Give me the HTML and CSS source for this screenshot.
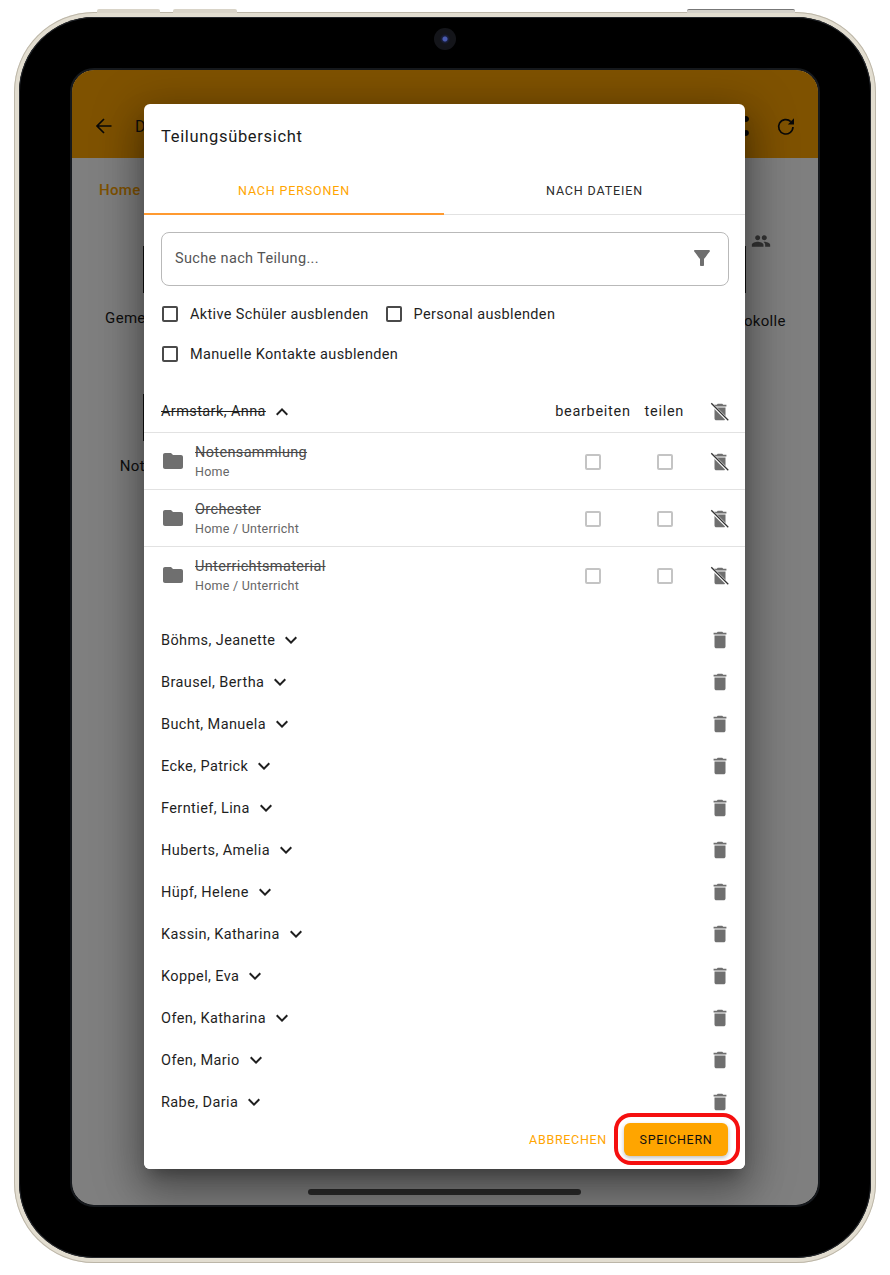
FILE: index.html
```html
<!DOCTYPE html>
<html lang="de">
<head>
  <meta charset="UTF-8" />
  <title>Teilungsübersicht</title>
  <link rel="stylesheet" href="styles.css">
</head>
<body>
  <svg class="icon-defs" width="0" height="0">
    <defs>
      <symbol id="i-trash" viewBox="0 0 24 24"><path d="M6 19c0 1.100.9 2 2 2h8c1.100 0 2-.9 2-2V7H6v12zM19 4h-3.500l-1-1h-5l-1 1H5v2h14V4z"/></symbol>
      <symbol id="i-trash-off" viewBox="0 0 24 24"><path d="M6 19c0 1.100.9 2 2 2h8c1.100 0 2-.9 2-2V7H6v12zM19 4h-3.500l-1-1h-5l-1 1H5v2h14V4z"/><path d="M3 3.500 21 21.500" fill="none" stroke="#fff" stroke-width="3.200"/><path d="M2.500 2.500 21 21" fill="none" stroke="#333" stroke-width="1.400"/></symbol>
      <symbol id="i-folder" viewBox="0 0 24 24"><path d="M10 4H4c-1.100 0-2 .9-2 2v12c0 1.100.9 2 2 2h16c1.100 0 2-.9 2-2V8c0-1.100-.9-2-2-2h-8l-2-2z"/></symbol>
      <symbol id="i-down" viewBox="0 0 24 24"><path d="M7.410 8.590 12 13.170l4.590-4.580L18 10l-6 6-6-6z"/></symbol>
      <symbol id="i-up" viewBox="0 0 24 24"><path d="M7.410 15.410 12 10.830l4.590 4.580L18 14l-6-6-6 6z"/></symbol>
    </defs>
  </svg>

  <div class="device">
    <span class="side-btn side-btn-a"></span>
    <span class="side-btn side-btn-b"></span>
    <span class="side-btn side-btn-c"></span>
    <div class="bezel">
      <span class="camera"></span>
      <div class="screen">
        <header class="appbar">
          <svg class="appbar-icon appbar-line" viewBox="0 0 24 24"><path d="M19.500 12H5M12 5l-7 7 7 7"/></svg>
          <span class="appbar-title">D</span>
          <span class="appbar-spacer"></span>
          <svg class="appbar-icon" viewBox="0 0 24 24"><path d="M18 16.080c-.76 0-1.440.3-1.960.77L8.910 12.700c.05-.23.09-.46.09-.7s-.04-.47-.09-.7l7.050-4.110c.54.5 1.250.81 2.040.81 1.660 0 3-1.340 3-3s-1.340-3-3-3-3 1.340-3 3c0 .24.04.47.09.7L8.040 9.810C7.500 9.310 6.790 9 6 9c-1.660 0-3 1.340-3 3s1.340 3 3 3c.79 0 1.500-.31 2.040-.81l7.120 4.160c-.05.21-.08.43-.08.650 0 1.610 1.310 2.920 2.920 2.920s2.920-1.310 2.920-2.920-1.310-2.920-2.920-2.920z"/></svg>
          <svg class="appbar-icon appbar-line" viewBox="0 0 24 24"><path d="M19 13a7.200 7.200 0 1 1-2.200-5.400"/><path class="appbar-head" d="M13.800 10.500H20V4.300z"/></svg>
        </header>
        <main class="files">
          <div class="crumbs">Home</div>
          <div class="tiles">
            <div class="tile">
              <span class="tile-mark"></span>
              <span class="tile-label">Gemeinsam</span>
            </div>
            <div class="tile tile-last">
              <span class="tile-mark"></span>
              <svg class="tile-badge" viewBox="0 0 24 24"><path d="M16 11c1.660 0 2.990-1.340 2.990-3S17.660 5 16 5s-3 1.340-3 3 1.340 3 3 3zm-8 0c1.660 0 2.990-1.340 2.990-3S9.660 5 8 5 5 6.340 5 8s1.340 3 3 3zm0 2c-2.330 0-7 1.170-7 3.500V19h14v-2.500C15 14.170 10.330 13 8 13zm8 0c-.29 0-.62.020-.97.050 1.160.84 1.970 1.970 1.970 3.450V19h6v-2.500c0-2.330-4.670-3.500-7-3.500z"/></svg>
              <span class="tile-label">Protokolle</span>
            </div>
            <div class="tile">
              <span class="tile-mark"></span>
              <span class="tile-label">Notizen</span>
            </div>
          </div>
        </main>
        <span class="home-bar"></span>
        <div class="scrim"></div>
      </div>
    </div>
  </div>

  <section class="dialog">
    <h2 class="dialog-title">Teilungsübersicht</h2>
    <div class="tabs">
      <div class="tab tab-active">Nach Personen</div>
      <div class="tab">Nach Dateien</div>
    </div>

    <div class="dialog-body">
      <div class="search">
        <span>Suche nach Teilung...</span>
        <svg class="search-filter" viewBox="0 0 24 24"><path d="M4.250 5.610C6.270 8.200 10 13 10 13v6c0 .55.45 1 1 1h2c.55 0 1-.45 1-1v-6s3.720-4.800 5.740-7.390A.998.998 0 0 0 18.950 4H5.040c-.83 0-1.300.95-.79 1.610z"/></svg>
      </div>

      <div class="filters">
        <label class="filter"><span class="check"></span>Aktive Schüler ausblenden</label>
        <label class="filter"><span class="check"></span>Personal ausblenden</label>
        <label class="filter"><span class="check"></span>Manuelle Kontakte ausblenden</label>
      </div>

      <div class="person-head">
        <span class="person-name struck">Armstark, Anna</span>
        <svg class="chevron"><use href="#i-up"/></svg>
        <span class="col-title col-edit">bearbeiten</span>
        <span class="col-title col-share">teilen</span>
        <svg class="trash"><use href="#i-trash-off"/></svg>
      </div>

      <div class="share-row">
        <svg class="folder"><use href="#i-folder"/></svg>
        <div class="share-text">
          <div class="share-name struck">Notensammlung</div>
          <div class="share-path">Home</div>
        </div>
        <span class="box box-edit"></span>
        <span class="box box-share"></span>
        <svg class="trash"><use href="#i-trash-off"/></svg>
      </div>
      <div class="share-row">
        <svg class="folder"><use href="#i-folder"/></svg>
        <div class="share-text">
          <div class="share-name struck">Orchester</div>
          <div class="share-path">Home / Unterricht</div>
        </div>
        <span class="box box-edit"></span>
        <span class="box box-share"></span>
        <svg class="trash"><use href="#i-trash-off"/></svg>
      </div>
      <div class="share-row share-row-last">
        <svg class="folder"><use href="#i-folder"/></svg>
        <div class="share-text">
          <div class="share-name struck">Unterrichtsmaterial</div>
          <div class="share-path">Home / Unterricht</div>
        </div>
        <span class="box box-edit"></span>
        <span class="box box-share"></span>
        <svg class="trash"><use href="#i-trash-off"/></svg>
      </div>

      <ul class="people">
        <li class="person"><span class="person-name">Böhms, Jeanette</span><svg class="chevron"><use href="#i-down"/></svg><svg class="trash"><use href="#i-trash"/></svg></li>
        <li class="person"><span class="person-name">Brausel, Bertha</span><svg class="chevron"><use href="#i-down"/></svg><svg class="trash"><use href="#i-trash"/></svg></li>
        <li class="person"><span class="person-name">Bucht, Manuela</span><svg class="chevron"><use href="#i-down"/></svg><svg class="trash"><use href="#i-trash"/></svg></li>
        <li class="person"><span class="person-name">Ecke, Patrick</span><svg class="chevron"><use href="#i-down"/></svg><svg class="trash"><use href="#i-trash"/></svg></li>
        <li class="person"><span class="person-name">Ferntief, Lina</span><svg class="chevron"><use href="#i-down"/></svg><svg class="trash"><use href="#i-trash"/></svg></li>
        <li class="person"><span class="person-name">Huberts, Amelia</span><svg class="chevron"><use href="#i-down"/></svg><svg class="trash"><use href="#i-trash"/></svg></li>
        <li class="person"><span class="person-name">Hüpf, Helene</span><svg class="chevron"><use href="#i-down"/></svg><svg class="trash"><use href="#i-trash"/></svg></li>
        <li class="person"><span class="person-name">Kassin, Katharina</span><svg class="chevron"><use href="#i-down"/></svg><svg class="trash"><use href="#i-trash"/></svg></li>
        <li class="person"><span class="person-name">Koppel, Eva</span><svg class="chevron"><use href="#i-down"/></svg><svg class="trash"><use href="#i-trash"/></svg></li>
        <li class="person"><span class="person-name">Ofen, Katharina</span><svg class="chevron"><use href="#i-down"/></svg><svg class="trash"><use href="#i-trash"/></svg></li>
        <li class="person"><span class="person-name">Ofen, Mario</span><svg class="chevron"><use href="#i-down"/></svg><svg class="trash"><use href="#i-trash"/></svg></li>
        <li class="person"><span class="person-name">Rabe, Daria</span><svg class="chevron"><use href="#i-down"/></svg><svg class="trash"><use href="#i-trash"/></svg></li>
      </ul>
    </div>

    <footer class="dialog-actions">
      <button class="btn-text">Abbrechen</button>
      <button class="btn-save">Speichern</button>
      <span class="callout"></span>
    </footer>
  </section>
</body>
</html>
```

FILE: styles.css
```css
* {
  box-sizing: border-box;
}

html, body {
  margin: 0;
  padding: 0;
  height: 1275px;
  overflow: hidden;
}

body {
  position: relative;
  background: #fff;
  font-family: Roboto, sans-serif;
  color: #1c1c1c;
}

.icon-defs {
  position: absolute;
}

/* device frame */
.device {
  position: relative;
  width: 862px;
  height: 1251px;
  margin: 12px 0 0 14px;
  padding: 5px;
  border-radius: 80px;
  background: #e2ddd0;
  box-shadow: inset 0 0 0 1px #bcb6a8;
}

.side-btn {
  position: absolute;
  top: -3px;
  height: 4px;
  background: #d9d4c8;
  border-radius: 2px 2px 0 0;
}

.side-btn-a {
  left: 83px;
  width: 63px;
}

.side-btn-b {
  left: 159px;
  width: 64px;
}

.side-btn-c {
  left: 673px;
  width: 108px;
  background: #d4d1ca;
  border-top: 1px solid #777;
}

.bezel {
  position: relative;
  height: 100%;
  padding: 53px;
  background: #000;
  border-radius: 75px;
  box-shadow: inset 0 0 0 1px #23262b;
}

.camera {
  position: absolute;
  top: 11px;
  left: 415px;
  width: 22px;
  height: 22px;
  border-radius: 50%;
  background: radial-gradient(circle, #4a5bb0 0 2px, #1a2040 3px, #14151a 5px 100%);
}

.screen {
  position: relative;
  display: flex;
  flex-direction: column;
  height: 1135px;
  background: #fff;
  border-radius: 22px;
  overflow: hidden;
  outline: 2px solid #16191d;
}

.appbar {
  display: flex;
  align-items: center;
  gap: 22px;
  height: 88px;
  padding: 24px 20px 0 20px;
  background: #ffa500;
}

.appbar-icon {
  width: 24px;
  height: 24px;
  fill: #111;
}

.appbar-line {
  fill: none;
  stroke: #111;
  stroke-width: 1.700;
}

.appbar-head {
  fill: #111;
  stroke: none;
}

.appbar-title {
  font-size: 16px;
  margin-left: -3px;
}

.appbar-spacer {
  flex: 1;
}

.files {
  flex: 1;
}

.crumbs {
  margin: 23px 0 0 27px;
  font-size: 15px;
  font-weight: 500;
  letter-spacing: 0.35px;
  color: #ffa500;
}

.tiles {
  display: grid;
  grid-template-columns: repeat(5, 1fr);
  grid-auto-rows: 148px;
  margin-top: 33px;
}

.tile {
  position: relative;
  display: flex;
  flex-direction: column;
  align-items: center;
  grid-column: 1;
  padding-top: 77px;
  font-size: 15px;
  letter-spacing: 0.3px;
}

.tile-last {
  grid-column: 5;
  padding-top: 80px;
  padding-left: 14px;
}

/* the tile pictures sit behind the dialog, only one edge shows */
.tile-mark {
  position: absolute;
  top: 14px;
  left: 71px;
  width: 60px;
  height: 47px;
  background: #222;
}

.tile-last .tile-mark {
  left: auto;
  right: 72px;
}

.tile-badge {
  position: absolute;
  top: -1px;
  left: 82px;
  width: 20px;
  height: 20px;
  fill: #666;
}

.home-bar {
  position: absolute;
  left: 236px;
  bottom: 10px;
  width: 273px;
  height: 6px;
  border-radius: 3px;
  background: #555;
}

.scrim {
  position: absolute;
  inset: 0;
  background: rgba(0, 0, 0, 0.5);
}

/* dialog */
.dialog {
  position: absolute;
  top: 104px;
  left: 144px;
  width: 601px;
  height: 1065px;
  display: flex;
  flex-direction: column;
  background: #fff;
  border-radius: 6px;
  overflow: hidden;
  box-shadow: 0 11px 15px -7px rgba(0, 0, 0, 0.3), 0 24px 38px 3px rgba(0, 0, 0, 0.2), 0 9px 46px 8px rgba(0, 0, 0, 0.25);
}

.dialog-title {
  margin: 0;
  padding: 21px 17px 0;
  height: 62px;
  font-size: 16.500px;
  line-height: 23px;
  font-weight: 400;
  letter-spacing: 0.67px;
  color: #1a1a1a;
}

.tabs {
  display: flex;
  height: 49px;
  border-bottom: 1px solid #e2e2e2;
}

.tab {
  flex: 1;
  padding-top: 17px;
  text-align: center;
  text-transform: uppercase;
  font-size: 12.500px;
  font-weight: 400;
  letter-spacing: 0.85px;
  color: #2b2b2b;
  height: 49px;
}

.tab-active {
  color: #ffa500;
  flex: none;
  width: 300px;
  border-bottom: 2px solid #ff9a30;
}

.dialog-body {
  flex: 1;
  overflow: hidden;
}

.search {
  display: flex;
  align-items: center;
  justify-content: space-between;
  height: 54px;
  margin: 17px 16px 0 17px;
  padding: 0 14px 2px 13px;
  border: 1px solid #b9b9b9;
  border-radius: 8px;
  font-size: 14.500px;
  letter-spacing: 0.35px;
  color: #555;
}

.search-filter {
  width: 24px;
  height: 24px;
  fill: #6f6f6f;
}

.filters {
  display: flex;
  flex-wrap: wrap;
  gap: 0 16px;
  margin: 8px 17px 0;
}

.filter {
  display: flex;
  align-items: center;
  gap: 12px;
  height: 40px;
  font-size: 14.500px;
  letter-spacing: 0.35px;
  color: #1f1f1f;
}

.filter:last-child {
  width: 100%;
}

.check {
  width: 16px;
  height: 16px;
  margin-left: 1px;
  border: 2px solid #4a4a4a;
  border-radius: 2px;
}

.person-head, .person, .share-row {
  display: flex;
  align-items: center;
  padding: 0 14.500px 0 17px;
}

.person-head {
  height: 44px;
  margin-top: 15px;
  padding-top: 2px;
  border-bottom: 1px solid #e2e2e2;
}

.person-name {
  font-size: 14.500px;
  letter-spacing: 0.4px;
  color: #1f1f1f;
}

.struck {
  text-decoration: line-through;
}

.chevron {
  flex: none;
  width: 24px;
  height: 24px;
  margin-left: 4px;
  fill: #1f1f1f;
}

.col-title {
  font-size: 14.500px;
  letter-spacing: 0.7px;
  color: #1f1f1f;
}

.col-edit {
  margin-left: auto;
}

.col-share {
  margin-left: 14px;
  margin-right: 24.500px;
}

.trash {
  flex: none;
  width: 22px;
  height: 22px;
  fill: #6f6f6f;
}

.share-row {
  height: 57px;
  padding-top: 2px;
  border-bottom: 1px solid #e2e2e2;
}

.share-row-last {
  border-bottom-color: transparent;
}

.folder {
  flex: none;
  width: 24px;
  height: 24px;
  margin: 0 10px 2px 0;
  fill: #6f6f6f;
}

.share-text {
  flex: 1;
  margin-bottom: 2px;
}

.share-name {
  font-size: 14.500px;
  letter-spacing: 0.35px;
  line-height: 20px;
  color: #4a4a4a;
}

.share-path {
  margin-top: 1px;
  font-size: 12.500px;
  letter-spacing: 0.25px;
  line-height: 16px;
  color: #666;
}

.box {
  flex: none;
  width: 16px;
  height: 16px;
  border: 2px solid #c4c4c4;
  border-radius: 2px;
}

.box-share {
  margin-left: 56px;
  margin-right: 35.500px;
}

.people {
  list-style: none;
  margin: 15px 0 0;
  padding: 0;
}

.person {
  height: 42px;
}

.person .trash {
  margin-left: auto;
}

.dialog-actions {
  position: relative;
  display: flex;
  align-items: center;
  justify-content: flex-end;
  gap: 17px;
  height: 57px;
  padding: 0 17px 2px 0;
  background: #fff;
}

.btn-text, .btn-save {
  border: none;
  font-family: Roboto, sans-serif;
  font-size: 12.500px;
  font-weight: 400;
  letter-spacing: 0.7px;
  text-transform: uppercase;
}

.btn-text {
  padding: 0;
  background: none;
  color: #ffa500;
}

.btn-save {
  width: 104px;
  height: 33px;
  border-radius: 6px;
  background: #ffa500;
  color: #111;
  box-shadow: 0 2px 4px rgba(0, 0, 0, 0.25);
}

.callout {
  position: absolute;
  right: 5px;
  bottom: 4px;
  width: 126px;
  height: 52px;
  border: 4px solid #f50f0f;
  border-radius: 17px;
}
```
